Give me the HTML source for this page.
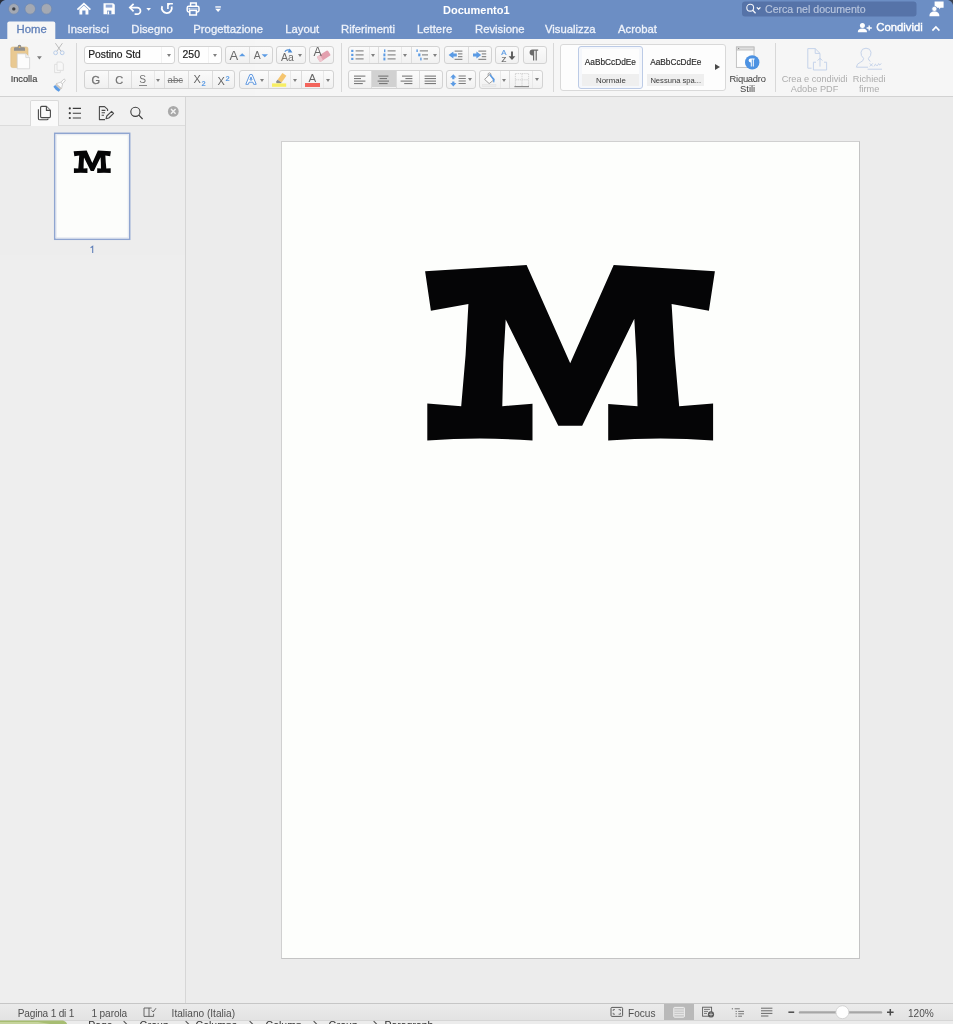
<!DOCTYPE html>
<html>
<head>
<meta charset="utf-8">
<title>Documento1</title>
<style>
*{box-sizing:border-box;margin:0;padding:0}
html,body{width:953px;height:1024px;overflow:hidden;background:#ececec;font-family:"Liberation Sans",sans-serif;}
#root{position:absolute;left:0;top:0;width:953px;height:1024px;overflow:hidden;will-change:transform;opacity:0.9999;}
.abs{position:absolute}
svg.abs{z-index:3}

#titlebar{position:absolute;left:0;top:0;width:953px;height:39px;background:#6c8ec4;}
#ribbon{position:absolute;left:0;top:39px;width:953px;height:58px;background:#f6f6f6;border-bottom:1px solid #d2d2d2;}
#sidebar{position:absolute;left:0;top:97px;width:186px;height:906px;background:#eeeeee;border-right:1px solid #d6d6d6;}
#sidetabs{position:absolute;left:0;top:0;width:185px;height:29px;background:#f2f2f2;border-bottom:1px solid #dcdcdc;}
#main{position:absolute;left:186px;top:97px;width:767px;height:906px;background:#ececec;}
#page{position:absolute;left:281px;top:141px;width:579px;height:818px;background:#fdfefc;border:1px solid #d0d0d0;border-right-color:#c4c4c4;border-bottom-color:#c4c4c4;}
#status{position:absolute;left:0;top:1003px;width:953px;height:17px;background:linear-gradient(#ebebeb,#e3e3e3);border-top:1px solid #c6c6c6;}
#below{position:absolute;left:0;top:1020px;width:953px;height:4px;background:#ececec;border-top:1px solid #d6d6d6;}
.t{position:absolute;white-space:nowrap;line-height:1;z-index:4;}
.tab{z-index:4;position:absolute;top:23px;color:#eef2fa;font-size:11.3px;-webkit-text-stroke:0.3px currentColor;white-space:nowrap;line-height:13px;}
.grp{position:absolute;height:18.6px;background:linear-gradient(#fbfbfb,#f1f1f1);border:1px solid #d3d3d3;border-radius:3px;}
.dv{position:absolute;top:0;width:1px;height:16.5px;background:#dcdcdc;}
.vsep{position:absolute;width:1px;background:#d8d8d8;}
.arr{z-index:4;position:absolute;width:0;height:0;border-left:2.8px solid transparent;border-right:2.8px solid transparent;border-top:3.4px solid #808080;}
#crumbs span{position:absolute;z-index:4;top:1020.4px;font-size:10.5px;color:#2e2e2e;line-height:11px;white-space:nowrap;}
#crumbs i{position:absolute;z-index:4;top:1022.4px;width:6px;height:6px;border-right:1.3px solid #4a4a4a;border-top:1.3px solid #4a4a4a;transform:rotate(45deg);}
.st{z-index:4;position:absolute;top:1007.8px;font-size:10.1px;color:#505050;white-space:nowrap;line-height:11px;}
</style>
</head>
<body>
<div id="root">
<div id="titlebar"></div>
<div id="ribbon"></div>
<div id="sidebar"><div id="sidetabs"></div></div>
<div id="main"></div>
<div id="page"></div>
<div id="status"></div>
<div id="below"></div>


<!-- TITLE BAR -->
<svg class="abs" style="left:0;top:0" width="953" height="39" viewBox="0 0 953 39">
  <path d="M0 0 H5 Q1 1 0 5 Z" fill="#2a2f3a"/><path d="M953 0 H948 Q952 1 953 5 Z" fill="#3a4254"/>
  <!-- traffic lights -->
  <circle cx="13.8" cy="8.9" r="5.3" fill="#a4a9b3" stroke="#6f89b3" stroke-width="0.8"/>
  <circle cx="13.8" cy="8.9" r="1.7" fill="#3c3f45"/>
  <circle cx="30.2" cy="8.9" r="5.3" fill="#a4a9b3" stroke="#6f89b3" stroke-width="0.8"/>
  <circle cx="46.5" cy="8.9" r="5.3" fill="#a4a9b3" stroke="#6f89b3" stroke-width="0.8"/>
  <!-- home -->
  <g fill="none" stroke="#fff" stroke-width="1.7" stroke-linejoin="miter">
    <path d="M77.4 9.6 L83.9 3.6 L90.4 9.6"/>
  </g>
  <path d="M79.4 9.4 L83.9 5.4 L88.4 9.4 V14.4 H85.5 V10.6 H82.3 V14.4 H79.4 Z" fill="#fff"/>
  <!-- save -->
  <path d="M103.5 3.2 H113.2 L114.8 4.8 V14.3 H103.5 Z" fill="#fff"/>
  <rect x="105.7" y="4.6" width="6.6" height="3" fill="#8fa8d6"/>
  <rect x="107" y="10.6" width="4.4" height="3.7" fill="#6c8ec4"/>
  <rect x="107.6" y="11.4" width="1.5" height="2.9" fill="#fff"/>
  <!-- undo -->
  <g fill="none" stroke="#fff" stroke-width="1.7">
    <path d="M130 7.6 H137.2 A3.3 3.3 0 0 1 137.2 14.2 H134.6"/>
    <path d="M133.6 3.8 L129.8 7.6 L133.6 11.4"/>
  </g>
  <path d="M146.3 8 H151 L148.65 10.8 Z" fill="#fff"/>
  <!-- redo -->
  <g fill="none" stroke="#fff" stroke-width="1.8">
    <path d="M162.2 6.2 A5 5 0 1 0 171.6 6.6"/>
    <path d="M167.9 8.9 V3.7 H172.9" stroke-width="1.6"/>
  </g>
  <path d="M167.9 3.7 H170.4 L167.9 6.2 Z" fill="#fff"/>
  <!-- print -->
  <g fill="none" stroke="#fff" stroke-width="1.5">
    <path d="M190.6 6 V3 H196.2 V6"/>
    <rect x="187.2" y="6.3" width="11.8" height="5.6" rx="1.6"/>
    <rect x="189.8" y="10.4" width="6.6" height="4.6" fill="#6c8ec4"/>
  </g>
  <rect x="188.6" y="8.3" width="9" height="1" fill="#fff" opacity="0.55"/>
  <rect x="188.6" y="8.2" width="1.3" height="1.3" fill="#fff"/>
  <!-- qat dropdown -->
  <rect x="215.3" y="6.3" width="5.6" height="1.3" fill="#fff"/>
  <path d="M215.2 8.7 H221 L218.1 11.9 Z" fill="#fff"/>
  <!-- search box -->
  <rect x="742" y="1.5" width="174.5" height="15" rx="3" fill="#5673a8"/>
  <circle cx="750.2" cy="7.7" r="3.4" fill="none" stroke="#f4f6fb" stroke-width="1.1"/>
  <path d="M752.7 10.3 L755.6 13.3" stroke="#f4f6fb" stroke-width="1.3" fill="none"/>
  <path d="M756.8 7.4 L758.6 9.2 L760.4 7.4" stroke="#fff" stroke-width="1.3" fill="none"/>
  <!-- comments/user icon -->
  <path d="M934.6 1.6 H943.6 V7.8 H940.6 L939.2 9.6 V7.8 H934.6 Z" fill="#fff"/>
  <circle cx="934.4" cy="8.9" r="2.6" fill="#fff" stroke="#6c8ec4" stroke-width="0.8"/>
  <path d="M929.4 16.2 Q929.4 11.6 934.4 11.6 Q939.4 11.6 939.4 16.2 Z" fill="#fff"/>
  <!-- home tab -->
  <path d="M7.3 39 V23.6 Q7.3 21.6 9.3 21.6 H53.3 Q55.3 21.6 55.3 23.6 V39 Z" fill="#f7f7f7"/>
  <!-- share icon -->
  <circle cx="862.4" cy="25.6" r="2.5" fill="#fff"/>
  <path d="M857.8 32.2 Q857.8 28.6 862.4 28.6 Q867 28.6 867 32.2 Z" fill="#fff"/>
  <path d="M866.6 28 H871.8 M869.2 25.4 V30.6" stroke="#fff" stroke-width="1.4" fill="none"/>
  <!-- collapse chevron -->
  <path d="M932.4 30.6 L935.9 27 L939.4 30.6" stroke="#fff" stroke-width="1.6" fill="none"/>
</svg>
<div class="t" style="left:443px;top:3.5px;font-size:11px;font-weight:bold;color:#fff;line-height:12px;">Documento1</div>
<div class="t" style="left:765px;top:3.3px;font-size:10.6px;color:#b9c6de;line-height:12px;-webkit-text-stroke:0.15px currentColor;">Cerca nel documento</div>
<div class="tab" style="left:16.6px;color:#5f7fb8;">Home</div>
<div class="tab" style="left:67.5px;">Inserisci</div>
<div class="tab" style="left:131.3px;">Disegno</div>
<div class="tab" style="left:193.3px;">Progettazione</div>
<div class="tab" style="left:285.3px;">Layout</div>
<div class="tab" style="left:341px;">Riferimenti</div>
<div class="tab" style="left:417px;">Lettere</div>
<div class="tab" style="left:475px;">Revisione</div>
<div class="tab" style="left:545px;">Visualizza</div>
<div class="tab" style="left:618px;">Acrobat</div>
<div class="tab" style="left:876.3px;top:21.4px;color:#fff;font-size:11.3px;-webkit-text-stroke:0.38px #fff;">Condividi</div>


<!-- RIBBON 1: clipboard + font -->
<svg class="abs" style="left:0;top:39px" width="345" height="57" viewBox="0 39 345 57">
  <!-- paste icon -->
  <rect x="10.8" y="47" width="17.2" height="20.6" rx="1.8" fill="#e9c992" stroke="#dcb87c" stroke-width="0.6"/>
  <path d="M14 50.8 V48.4 Q14 47.2 15.2 47.2 H17.6 Q17.6 44.8 19.5 44.8 Q21.4 44.8 21.4 47.2 H23.8 Q25 47.2 25 48.4 V50.8 Z" fill="#8f8f8f"/>
  <circle cx="19.5" cy="47.2" r="0.9" fill="#e9b85c"/>
  <path d="M17.2 53.8 H25.8 L29.6 57.6 V68.8 H17.2 Z" fill="#fdfdfd" stroke="#cfcfcf" stroke-width="0.7"/>
  <path d="M25.8 53.8 V57.6 H29.6" fill="#f1f1f1" stroke="#cfcfcf" stroke-width="0.7"/>
  <path d="M37 56.2 H41.8 L39.4 59.4 Z" fill="#7d7d7d"/>
  <!-- cut (disabled) -->
  <g fill="none" stroke-width="1">
    <path d="M55.4 43.2 L61 51.2 M62.4 43.2 L56.8 51.2" stroke="#bcbcbc"/>
    <circle cx="55.6" cy="52.8" r="1.9" stroke="#b9cdea"/>
    <circle cx="62.2" cy="52.8" r="1.9" stroke="#b9cdea"/>
  </g>
  <!-- copy (disabled) -->
  <g fill="#f8f8f8" stroke="#dcdcdc" stroke-width="0.9">
    <path d="M54.6 64.4 H60.4 V72.6 H54.6 Z"/>
    <path d="M57 62 H61.4 L63.4 64 V70.4 H57 Z"/>
  </g>
  <!-- format painter -->
  <g transform="rotate(42 59 86)">
    <rect x="57.9" y="77.2" width="2.2" height="5.4" rx="1" fill="#fdfdfd" stroke="#b5b5b5" stroke-width="0.6"/>
    <path d="M57.6 82.2 H60.4 L62.6 86.2 H55.4 Z" fill="#fdfdfd" stroke="#b5b5b5" stroke-width="0.6"/>
    <rect x="55.4" y="86.2" width="7.2" height="1.6" fill="#cfc8c0"/>
    <path d="M55.4 87.8 H62.6 V90.4 Q59 91.6 55.4 90.4 Z" fill="#5b9be4"/>
  </g>
  <!-- A grow / shrink -->
  <path d="M239 56.2 H245.4 L242.2 53.2 Z" fill="#5b9be4"/>
  <path d="M261.6 54.2 H268 L264.8 57.2 Z" fill="#5b9be4"/>
  <!-- Aa arrow -->
  <path d="M284.8 51.6 Q287.6 48.6 290.8 51" fill="none" stroke="#4a8ad4" stroke-width="1.3"/>
  <path d="M289.6 48.4 L292.4 52.6 L287.8 52.6 Z" fill="#4a8ad4"/>
  <!-- clear formatting eraser -->
  <g transform="rotate(-33 323.8 56.1)">
    <rect x="317.4" y="53" width="12.8" height="6.2" rx="1.2" fill="#e3a0ae"/>
    <rect x="317.4" y="53" width="3.6" height="6.2" rx="1.2" fill="#efc6ce"/>
  </g>
</svg>
<div class="vsep" style="left:76px;top:43px;height:49px;"></div>
<div class="vsep" style="left:340.5px;top:43px;height:49px;"></div>
<div class="t" style="left:10.7px;top:73.6px;font-size:9.2px;color:#3c3c3c;line-height:11px;-webkit-text-stroke:0.15px #3c3c3c;">Incolla</div>
<!-- font name / size -->
<div class="grp" style="left:84px;top:45.7px;width:91px;background:#fff;"><div class="dv" style="left:76px;background:#f3f3f3;"></div></div>
<div class="t" style="left:88.2px;top:48.6px;font-size:10.3px;color:#1c1c1c;line-height:12px;-webkit-text-stroke:0.2px #1c1c1c;">Postino Std</div>
<div class="arr" style="left:166.5px;top:54px;"></div>
<div class="grp" style="left:178px;top:45.7px;width:43.5px;background:#fff;"><div class="dv" style="left:29px;background:#f3f3f3;"></div></div>
<div class="t" style="left:182.6px;top:48.6px;font-size:10.4px;color:#1c1c1c;line-height:12px;-webkit-text-stroke:0.2px #1c1c1c;">250</div>
<div class="arr" style="left:212.5px;top:54px;"></div>
<!-- A^ Av -->
<div class="grp" style="left:225px;top:45.7px;width:47.5px;"><div class="dv" style="left:22.5px;"></div></div>
<div class="t" style="left:229.5px;top:47.5px;font-size:13px;color:#6a6a6a;line-height:15px;">A</div>
<div class="t" style="left:253.8px;top:50.2px;font-size:10.4px;color:#6a6a6a;line-height:12px;">A</div>
<!-- Aa -->
<div class="grp" style="left:276px;top:45.7px;width:30px;"></div>
<div class="t" style="left:281px;top:50.6px;font-size:10.6px;color:#6a6a6a;line-height:12px;">A<span style="font-size:10.4px;letter-spacing:0">a</span></div>
<div class="arr" style="left:298px;top:54px;"></div>
<!-- clear -->
<div class="grp" style="left:309px;top:45.7px;width:25px;"></div>
<div class="t" style="left:313.6px;top:46.4px;font-size:12.4px;color:#666;line-height:13px;">A</div>
<!-- row 2: G C S abc X2 X2 -->
<div class="grp" style="left:84px;top:70.3px;width:150.5px;">
  <div class="dv" style="left:22.5px;"></div><div class="dv" style="left:46px;"></div><div class="dv" style="left:68.6px;background:#e8e8e8"></div><div class="dv" style="left:78.6px;"></div><div class="dv" style="left:102.6px;"></div><div class="dv" style="left:126.6px;"></div>
</div>
<div class="t" style="left:91.4px;top:73.6px;font-size:11px;color:#727272;line-height:12px;-webkit-text-stroke:0.3px #727272;">G</div>
<div class="t" style="left:115.2px;top:73.6px;font-size:11px;color:#727272;line-height:12px;-webkit-text-stroke:0.2px #727272;">C</div>
<div class="t" style="left:138.8px;top:73.6px;font-size:10.2px;color:#727272;line-height:11px;border-bottom:1px solid #8a8a8a;padding:0 0.5px;">S</div>
<div class="arr" style="left:156px;top:78.6px;"></div>
<div class="t" style="left:167.6px;top:74.4px;font-size:9.5px;color:#777;line-height:11px;text-decoration:line-through;">abc</div>
<div class="t" style="left:193.4px;top:73px;font-size:11px;color:#666;line-height:12px;">X<span style="font-size:7.6px;font-weight:bold;color:#5b9be4;position:relative;top:2.5px;left:0.8px;">2</span></div>
<div class="t" style="left:217.4px;top:74.6px;font-size:11px;color:#666;line-height:12px;">X<span style="font-size:7.6px;font-weight:bold;color:#5b9be4;position:relative;top:-4px;left:0.8px;">2</span></div>
<!-- text effects / highlight / font color -->
<div class="grp" style="left:238.8px;top:70.3px;width:95px;">
  <div class="dv" style="left:28.4px;"></div><div class="dv" style="left:50.6px;background:#e8e8e8"></div><div class="dv" style="left:61.2px;"></div><div class="dv" style="left:83px;background:#e8e8e8"></div>
</div>
<svg class="abs" style="left:243px;top:72px" width="16" height="15" viewBox="243 72 16 15"><path d="M245.8 84.3 L249.8 74.6 H252.2 L256.2 84.3 H253.6 L252.9 82.2 H249.1 L248.4 84.3 Z M249.9 80 H252.1 L251 76.9 Z" fill="#fff" fill-rule="evenodd" stroke="#5f98e0" stroke-width="1" stroke-linejoin="round"/></svg>
<div class="arr" style="left:260px;top:78.6px;"></div>
<svg class="abs" style="left:270px;top:71px" width="20" height="18" viewBox="270 71 20 18">
  <path d="M277.6 79.8 L282.4 73 L286.4 75.8 L281.6 82.4 Z" fill="#f5c56f"/>
  <path d="M276 81.8 L277.6 79.8 L281.6 82.4 L280.6 83.2 L276.6 83.2 Z" fill="#8c8c8c"/>
  <rect x="272" y="83.4" width="14.2" height="3.4" fill="#f7ee63"/>
</svg>
<div class="arr" style="left:293.2px;top:78.6px;"></div>
<div class="t" style="left:308.4px;top:71.6px;font-size:11.5px;color:#666;line-height:13px;">A</div>
<div class="abs" style="left:305px;top:83.4px;width:14.8px;height:3.4px;background:#f3655c;z-index:4"></div>
<div class="arr" style="left:325.8px;top:78.6px;"></div>


<!-- RIBBON 2: paragraph -->
<div class="grp" style="left:347.5px;top:45.7px;width:92.5px;">
  <div class="dv" style="left:20px;background:#e8e8e8"></div><div class="dv" style="left:29.6px;"></div><div class="dv" style="left:52.4px;background:#e8e8e8"></div><div class="dv" style="left:62.2px;"></div>
</div>
<div class="grp" style="left:444px;top:45.7px;width:48px;"><div class="dv" style="left:22.6px;"></div></div>
<div class="grp" style="left:495px;top:45.7px;width:24px;"></div>
<div class="grp" style="left:522.5px;top:45.7px;width:24.5px;"></div>
<div class="grp" style="left:347.5px;top:70.3px;width:95.5px;">
  <div class="abs" style="left:22.8px;top:0;width:24.4px;height:16px;background:#d1d1d1;"></div>
  <div class="dv" style="left:22.8px;"></div><div class="dv" style="left:47px;"></div><div class="dv" style="left:70.4px;"></div>
</div>
<div class="grp" style="left:446px;top:70.3px;width:29.5px;"></div>
<div class="grp" style="left:479px;top:70.3px;width:63.5px;">
  <div class="dv" style="left:20.4px;background:#e8e8e8"></div><div class="dv" style="left:29px;"></div><div class="dv" style="left:52.4px;background:#e8e8e8"></div>
</div>
<div class="arr" style="left:370.6px;top:54px;"></div>
<div class="arr" style="left:403.2px;top:54px;"></div>
<div class="arr" style="left:432.6px;top:54px;"></div>
<div class="arr" style="left:468.2px;top:78.4px;"></div>
<div class="arr" style="left:502.2px;top:78.6px;"></div>
<div class="arr" style="left:535px;top:78.4px;"></div>
<svg class="abs" style="left:345px;top:39px" width="210" height="57" viewBox="345 39 210 57">
  <!-- bullets -->
  <g fill="#5b9be4"><rect x="351.2" y="49.8" width="2.2" height="2.2"/><rect x="351.2" y="53.8" width="2.2" height="2.2"/><rect x="351.2" y="57.8" width="2.2" height="2.2"/></g>
  <g stroke="#8e8e8e" stroke-width="1.3"><path d="M355.6 50.9 H363.6 M355.6 54.9 H363.6 M355.6 58.9 H363.6"/></g>
  <!-- numbering -->
  <g fill="#5b9be4"><rect x="384" y="49.4" width="1.4" height="2.8"/><rect x="383.4" y="53.5" width="2" height="2.8"/><rect x="383.4" y="57.6" width="2" height="2.8"/></g>
  <g stroke="#8e8e8e" stroke-width="1.3"><path d="M387.6 50.9 H395.6 M387.6 54.9 H395.6 M387.6 58.9 H395.6"/></g>
  <!-- multilevel -->
  <g fill="#5b9be4"><rect x="416.4" y="49.4" width="1.4" height="2.6"/><rect x="418.2" y="53.5" width="2.2" height="2.8"/><rect x="420.2" y="57.6" width="1.4" height="2.8"/></g>
  <g stroke="#8e8e8e" stroke-width="1.3"><path d="M419.8 50.9 H428 M422 54.9 H428 M423.6 58.9 H428"/></g>
  <!-- decrease indent -->
  <path d="M453.4 51.6 V53.6 H456.8 V56.4 H453.4 V58.4 L448.6 55 Z" fill="#5b9be4"/>
  <g stroke="#8e8e8e" stroke-width="1.2"><path d="M454.6 51.2 H462.4 M458 53.9 H462.4 M458 56.6 H462.4 M454.6 59.3 H462.4"/></g>
  <!-- increase indent -->
  <path d="M476.4 51.6 V53.6 H473 V56.4 H476.4 V58.4 L481.2 55 Z" fill="#5b9be4"/>
  <g stroke="#8e8e8e" stroke-width="1.2"><path d="M478.4 51.2 H486.2 M481.8 53.9 H486.2 M481.8 56.6 H486.2 M478.4 59.3 H486.2"/></g>
  <!-- sort arrow -->
  <path d="M512 51.6 V58.4" fill="none" stroke="#5b5b5b" stroke-width="1.9"/>
  <path d="M508.6 56.2 H515.4 L512 60 Z" fill="#5b5b5b"/>
  <!-- pilcrow -->
  <path d="M536.6 49.6 H532.4 Q529.6 49.6 529.6 52.6 Q529.6 55.4 532.4 55.4 H533 V60.4 H534.2 V50.8 H535.6 V60.4 H536.8 V50.8 H538.2 V49.6 Z" fill="#6a6a6a"/>
  <!-- align -->
  <g stroke="#6d6d6d" stroke-width="1">
    <path d="M354 76.1 H365.4 M354 78.6 H361 M354 81.1 H365.4 M354 83.6 H362.8"/>
    <path d="M378.2 76.1 H388.4 M379.6 78.6 H387 M377.6 81.1 H389 M379 83.6 H387.6"/>
    <path d="M402 76.1 H412.4 M405.4 78.6 H412.4 M400.6 81.1 H412.4 M404.2 83.6 H412.4"/>
    <path d="M424.6 76.1 H436 M424.6 78.6 H436 M424.6 81.1 H436 M424.6 83.6 H436"/>
  </g>
  <!-- line spacing -->
  <path d="M453.3 74.2 L456.4 77.6 H454.4 V79.2 H452.2 V77.6 H450.2 Z M453.3 86.4 L456.4 83 H454.4 V81.4 H452.2 V83 H450.2 Z" fill="#5b9be4"/>
  <g stroke="#7d7d7d" stroke-width="1"><path d="M458.6 76 H465.8 M458.6 78.5 H465.8 M458.6 81 H465.8 M458.6 83.5 H465.8"/></g>
  <!-- shading bucket -->
  <path d="M484.6 79.4 L489.6 74.6 L494.2 79.6 L489.2 83.6 Z" fill="#fdfdfd" stroke="#8a8a8a" stroke-width="0.8"/>
  <path d="M488 75.6 Q487.6 72.8 489.8 72.8 Q491.2 73 491 76" fill="none" stroke="#8a8a8a" stroke-width="0.8"/>
  <path d="M490.2 74 L494.4 78.8 Q495 81.4 494 83 Q492.8 81.6 492.8 79.8 L489.4 75.2 Z" fill="#5b9be4"/>
  <rect x="482.4" y="84.2" width="13.6" height="2.6" fill="#ececec" stroke="#dedede" stroke-width="0.4"/>
  <!-- borders -->
  <g stroke="#cfcfcf" stroke-width="0.9" fill="none" stroke-dasharray="1.4 0.8"><path d="M515.4 73.6 H528.6 M515.4 73.6 V86 M528.6 73.6 V86 M522 73.6 V86 M515.4 79.8 H528.6"/></g>
  <path d="M514.4 86.6 H529" stroke="#8b8b8b" stroke-width="1.2"/>
</svg>
<div class="t" style="left:501.2px;top:48.6px;font-size:7.8px;color:#5b9be4;line-height:7px;text-align:center;-webkit-text-stroke:0.2px currentColor;">A<br><span style="color:#666">Z</span></div>
<div class="vsep" style="left:553px;top:43px;height:49px;"></div>


<!-- RIBBON 3: styles + right -->
<div class="abs" style="left:560px;top:44px;width:166px;height:47px;background:#fdfdfd;border:1px solid #d9d9d9;border-radius:3px;"></div>
<div class="abs" style="left:578px;top:45.8px;width:64.6px;height:43.4px;background:#f5f7fb;border:1.4px solid #bccbe6;border-radius:3px;"></div>
<div class="abs" style="left:582px;top:49px;width:56.6px;height:36.6px;background:#efefef;"></div>
<div class="abs" style="left:582px;top:49px;width:56.6px;height:25px;background:#fdfdfd;"></div>
<div class="abs" style="left:647.2px;top:49px;width:57px;height:36.6px;background:#efefef;"></div>
<div class="abs" style="left:647.2px;top:49px;width:57px;height:25px;background:#fdfdfd;"></div>
<div class="t" style="left:584.8px;top:57px;font-size:8.3px;color:#2a2a2a;line-height:10px;-webkit-text-stroke:0.15px #2a2a2a;">AaBbCcDdEe</div>
<div class="t" style="left:650.2px;top:57px;font-size:8.3px;color:#2a2a2a;line-height:10px;-webkit-text-stroke:0.15px #2a2a2a;">AaBbCcDdEe</div>
<div class="t" style="left:596px;top:75.6px;font-size:7.9px;color:#3a3a3a;line-height:9px;">Normale</div>
<div class="t" style="left:650.4px;top:75.6px;font-size:7.6px;color:#3a3a3a;line-height:9px;">Nessuna spa...</div>
<div class="abs" style="z-index:4;left:714.6px;top:63.6px;width:0;height:0;border-top:3.6px solid transparent;border-bottom:3.6px solid transparent;border-left:5px solid #4a4a4a;"></div>
<svg class="abs" style="left:730px;top:39px" width="223" height="57" viewBox="730 39 223 57">
  <!-- Riquadro stili icon -->
  <rect x="736.4" y="47" width="17.6" height="20.4" fill="#fdfdfd" stroke="#bdbdbd" stroke-width="0.9"/>
  <rect x="736.4" y="47" width="17.6" height="3" fill="#dedede" stroke="#bdbdbd" stroke-width="0.9"/>
  <rect x="738" y="48" width="1.2" height="1" fill="#8b8b8b"/>
  <circle cx="752.2" cy="62.4" r="7.2" fill="#4d92e2"/>
  <path d="M753.4 58.6 H750.6 Q748.6 58.6 748.6 60.6 Q748.6 62.4 750.6 62.4 H750.8 V66.4 H751.8 V59.6 H752.8 V66.4 H753.8 V59.6 H754.6 V58.6 Z" fill="#fff"/>
  <!-- PDF icon (disabled) -->
  <g fill="none" stroke="#c5d3ea" stroke-width="1">
    <path d="M820 59.6 V53.4 L815.2 48.6 H807.8 V68.2 H811.6"/>
    <path d="M815.2 48.6 V53.4 H820"/>
    <path d="M816 62.2 H813.4 V70 H826.6 V62.2 H824"/>
    <path d="M820 66.6 V58.4 M817.6 60.6 L820 58.2 L822.4 60.6"/>
  </g>
  <!-- sign icon (disabled) -->
  <g fill="none" stroke="#c5d3ea" stroke-width="1">
    <path d="M863.6 58.4 Q860.6 55.8 861 52.2 Q861.6 48.2 866 48.2 Q870.4 48.2 871 52.2 Q871.4 55.8 868.4 58.4"/>
    <path d="M863.6 58.4 Q863.6 61 860.6 62.2 Q856.6 63.6 856.4 67.2 H868"/>
    <path d="M868.4 58.4 Q868.4 60.4 870.4 61.4"/>
    <path d="M867.6 69.2 H882"/>
    <path d="M869.8 63.4 L872.8 66.4 M872.8 63.4 L869.8 66.4"/>
    <path d="M874.4 66.2 Q875.4 62.6 876.4 65 Q877.2 67 878 64.4 Q878.8 62.6 879.6 65 L881.4 63.6"/>
  </g>
</svg>
<div class="t" style="left:729.6px;top:74.2px;font-size:9.4px;color:#3c3c3c;line-height:9.8px;text-align:center;width:36px;"><span style="letter-spacing:-0.25px">Riquadro</span><br>Stili</div>
<div class="vsep" style="left:774.5px;top:43px;height:49px;"></div>
<div class="t" style="left:781.6px;top:75.2px;font-size:9.2px;color:#adadad;line-height:9.5px;text-align:center;width:66px;">Crea e condividi<br>Adobe PDF</div>
<div class="t" style="left:852.6px;top:75.2px;font-size:9.2px;color:#adadad;line-height:9.5px;text-align:center;width:33px;">Richiedi<br>firme</div>


<!-- SIDEBAR -->
<div class="abs" style="left:30px;top:100px;width:28.6px;height:26px;background:#fbfbfb;border:1px solid #dadada;border-bottom:none;border-radius:2px 2px 0 0;"></div>
<svg class="abs" style="left:0;top:96px" width="185" height="170" viewBox="0 96 185 170">
  <!-- pages icon -->
  <g fill="#fbfbfb" stroke="#4a4a4a" stroke-width="1.1" stroke-linejoin="round">
    <path d="M38.4 109.2 V118.4 Q38.4 119.8 39.8 119.8 H46.8 Q48 119.8 48.2 118.6" fill="none"/>
    <path d="M41.6 106.4 H46.4 L50.4 110.4 V116.6 Q50.4 117.6 49.4 117.6 H41.6 Q40.6 117.6 40.6 116.6 V107.4 Q40.6 106.4 41.6 106.4 Z"/>
    <path d="M46.4 106.4 V110.4 H50.4" fill="#e9e9e9"/>
  </g>
  <!-- list icon -->
  <g fill="#3c3c3c"><circle cx="69.8" cy="108.4" r="1.1"/><circle cx="69.8" cy="113.2" r="1.1"/><circle cx="69.8" cy="118" r="1.1"/></g>
  <path d="M72.8 108.4 H81 M72.8 113.2 H81 M72.8 118 H81" stroke="#3c3c3c" stroke-width="1.1"/>
  <!-- review icon -->
  <g fill="none" stroke="#4a4a4a" stroke-width="1.1" stroke-linejoin="round">
    <path d="M107.6 111 V109.4 L104.6 106.6 H99.4 V119.6 H105"/>
    <path d="M101.6 110.4 H105.4 M101.6 112.8 H105 M101.6 115.2 H104"/>
    <path d="M106 118.8 L106.8 116 L111.6 111.4 L113.6 113.4 L108.8 118 Z"/>
  </g>
  <!-- search icon -->
  <circle cx="135.4" cy="111.8" r="4.6" fill="none" stroke="#3c3c3c" stroke-width="1.1"/>
  <path d="M138.8 115.2 L142.6 119" stroke="#3c3c3c" stroke-width="1.2"/>
  <!-- close -->
  <circle cx="173.3" cy="111.4" r="5.4" fill="#a9a9a9"/>
  <path d="M171 109.1 L175.6 113.7 M175.6 109.1 L171 113.7" stroke="#f3f3f3" stroke-width="1.4"/>
  <!-- thumbnail -->
  <rect x="54.7" y="133.3" width="75" height="106" fill="#fdfefc" stroke="#8fa5d0" stroke-width="1.5"/>
  <rect x="56.2" y="134.8" width="72" height="103" fill="none" stroke="#dfe4ee" stroke-width="0.8"/>
  <path fill="#050506" transform="translate(92.3 150.4) scale(0.1287) translate(-570.2 -265.1)" d="M425.1 271.3 L526.6 265.1 L570.2 363.2 L613.7 265.1 L714.9 271.3 L708.9 310.7 L671.6 304 Q674 355 679.2 406.2 L713.1 403.4 L713.1 440.6 Q660.5 436.6 608.2 440.6 L608.2 404 L637.5 406.2 Q637.5 362 634.3 318.8 L582.2 425.7 L558.3 425.7 L505.7 319.6 Q502.6 362 502.3 406.2 L532.5 403.7 L532.5 440.6 Q480 436.6 427.3 440.6 L427.3 403.4 L461.2 406.2 Q466.4 355 468.4 304 L430.9 310.7 Z"/>
</svg>
<svg class="abs" style="left:88px;top:244px" width="10" height="12" viewBox="88 244 10 12"><path d="M90.6 247.8 L92.7 246.3 V253" fill="none" stroke="#5f7fb8" stroke-width="1.1"/></svg>

<!-- STATUS BAR -->
<div class="st" style="left:17.8px;letter-spacing:-0.2px;">Pagina 1 di 1</div>
<div class="st" style="left:91.4px;letter-spacing:-0.1px">1 parola</div>
<div class="st" style="left:171.6px;">Italiano (Italia)</div>
<div class="st" style="left:628px;">Focus</div>
<div class="st" style="left:908px;">120%</div>
<div class="abs" style="left:664.2px;top:1004px;width:29.6px;height:16.4px;background:#b9b9b9;"></div>
<svg class="abs" style="left:0;top:1003px" width="953" height="21" viewBox="0 1003 953 21">
  <!-- proofing book -->
  <g fill="none" stroke="#5a5a5a" stroke-width="0.9">
    <path d="M144 1008 H149 V1016.4 H144 Z M149 1008 H151.6 M149 1016.4 H153.6 V1013.8"/>
    <path d="M151.6 1010.4 L153.2 1012 L156 1008.2"/>
  </g>
  <!-- focus -->
  <rect x="611" y="1007.4" width="11.6" height="9" rx="1" fill="none" stroke="#5a5a5a" stroke-width="1"/>
  <path d="M613.2 1011 V1009.6 H615 M618.6 1009.6 H620.4 V1011 M613.2 1012.8 V1014.2 H615 M618.6 1014.2 H620.4 V1012.8" fill="none" stroke="#5a5a5a" stroke-width="0.8"/>
  <!-- print layout (selected) -->
  <rect x="673.8" y="1007.4" width="10.6" height="9.8" rx="0.8" fill="#c9c9c9" stroke="#efefef" stroke-width="1"/>
  <path d="M674.4 1010 H683.8 M674.4 1012.3 H683.8 M674.4 1014.6 H683.8" stroke="#efefef" stroke-width="0.8"/>
  <!-- web layout -->
  <rect x="702.6" y="1007.2" width="9" height="9" fill="none" stroke="#5a5a5a" stroke-width="0.9"/>
  <path d="M704 1009.4 H710 M704 1011.4 H708 M704 1013.4 H707" stroke="#5a5a5a" stroke-width="0.8"/>
  <circle cx="711" cy="1014.4" r="3.1" fill="#5a5a5a"/>
  <path d="M709 1014.4 H713 M711 1012.4 V1016.4" stroke="#e9e9e9" stroke-width="0.6"/>
  <!-- outline -->
  <path d="M734.6 1008.8 H739.8 M738.2 1011.4 H744 M738.2 1013.8 H744 M738.2 1016.2 H742" stroke="#6a6a6a" stroke-width="0.9"/>
  <g fill="#6a6a6a"><rect x="731.8" y="1008.3" width="1.2" height="1"/><rect x="735.6" y="1010.9" width="1.2" height="1"/><rect x="735.6" y="1013.3" width="1.2" height="1"/><rect x="735.6" y="1015.7" width="1.2" height="1"/></g>
  <!-- draft -->
  <path d="M761 1008.2 H772.4 M761 1010.8 H772.4 M761 1013.4 H772.4 M761 1016 H768.4" stroke="#5a5a5a" stroke-width="0.9"/>
  <!-- zoom -->
  <path d="M788.4 1012.2 H794.2" stroke="#4a4a4a" stroke-width="1.5"/>
  <path d="M800 1012.4 H881" stroke="#a6a6a6" stroke-width="2.4" stroke-linecap="round"/>
  <circle cx="842.4" cy="1012.2" r="6.5" fill="#fefefe" stroke="#cdcdcd" stroke-width="0.8"/>
  <path d="M887 1012.2 H893.6 M890.3 1008.9 V1015.5" stroke="#4a4a4a" stroke-width="1.5"/>
  <!-- stuff below window -->
  <path d="M0 1020.4 H63 Q66.6 1021.6 67 1024 H0 Z" fill="#a7bd72"/>
  <path d="M0 1022 H38 L50 1024 H0 Z" fill="#c6d49c"/>
</svg>
<div id="crumbs">
<span style="left:88.2px">Page</span><span style="left:139.6px">Group</span><span style="left:195.6px">Columns</span><span style="left:265.6px">Column</span><span style="left:328.6px">Group</span><span style="left:384.4px">Paragraph</span>
<i style="left:121px"></i><i style="left:183px"></i><i style="left:247px"></i><i style="left:311px"></i><i style="left:370.6px"></i>
</div>
<!-- BIG M -->
<svg class="abs" style="left:0;top:0" width="953" height="1024" viewBox="0 0 953 1024">
<path id="bigM" fill="#050506" d="M425.1 271.3 L526.6 265.1 L570.2 363.2 L613.7 265.1 L714.9 271.3 L708.9 310.7 L671.6 304 Q674 355 679.2 406.2 L713.1 403.4 L713.1 440.6 Q660.5 436.6 608.2 440.6 L608.2 404 L637.5 406.2 Q637.5 362 634.3 318.8 L582.2 425.7 L558.3 425.7 L505.7 319.6 Q502.6 362 502.3 406.2 L532.5 403.7 L532.5 440.6 Q480 436.6 427.3 440.6 L427.3 403.4 L461.2 406.2 Q466.4 355 468.4 304 L430.9 310.7 Z"/>
</svg>
</div>
</body>
</html>
